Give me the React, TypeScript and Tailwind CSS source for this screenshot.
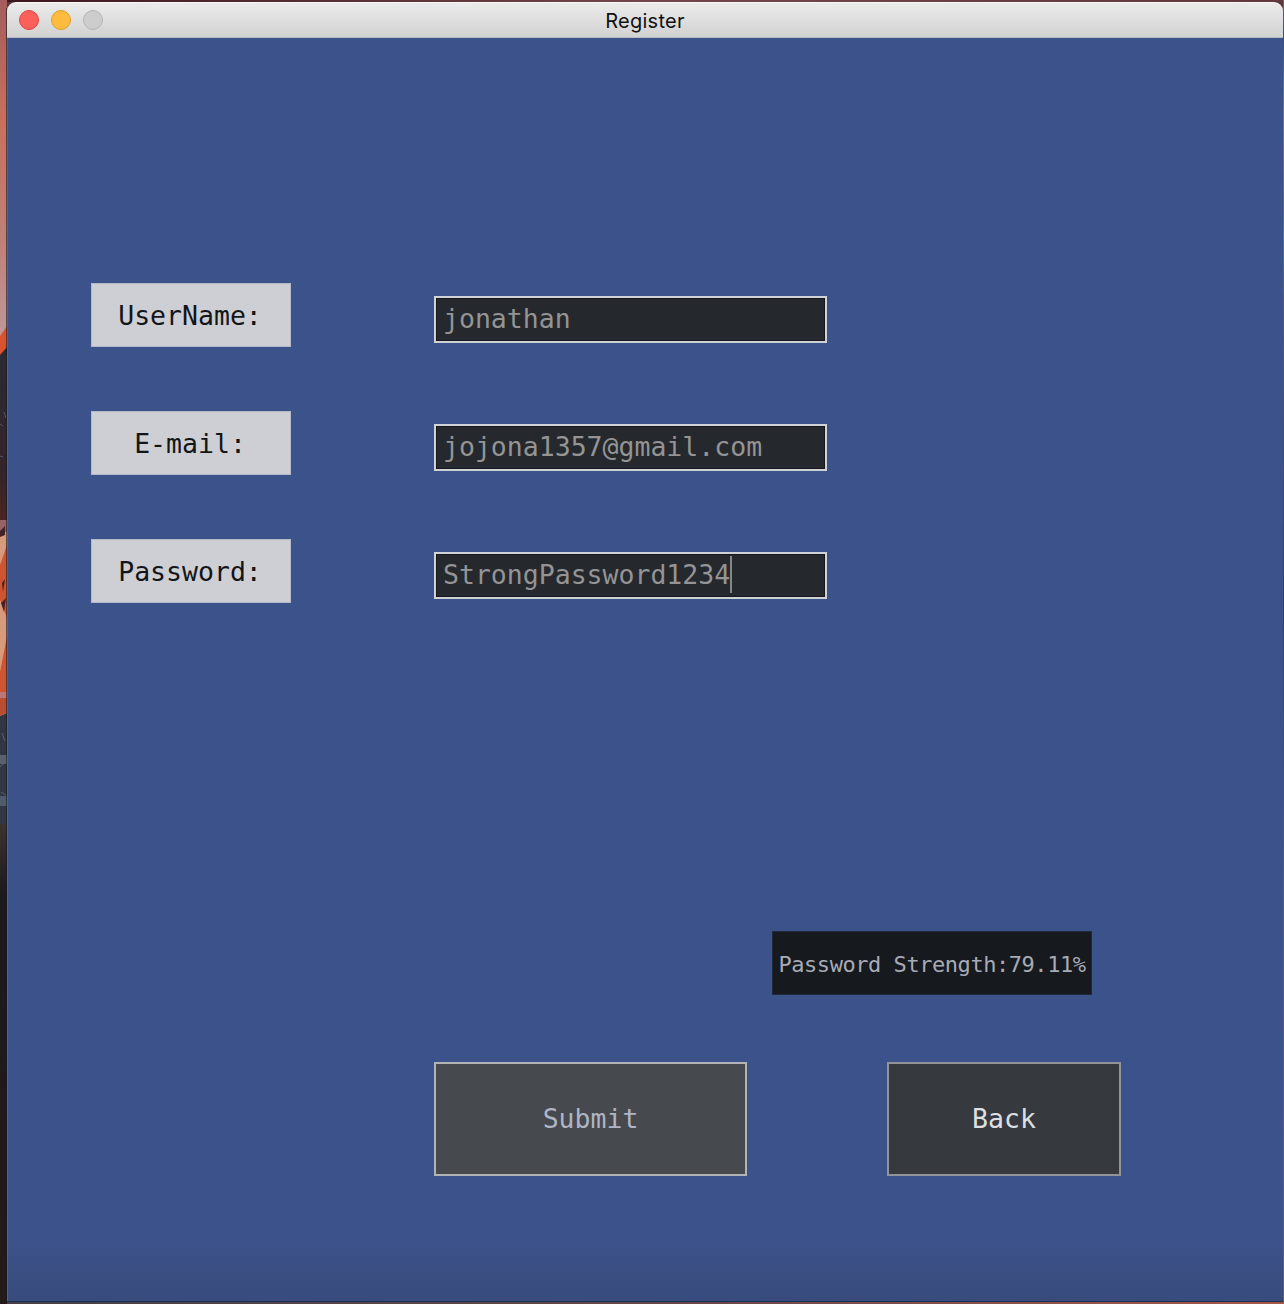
import React from "react";

const mono = "font-['DejaVu_Sans_Mono',monospace]";

const fields = [
  { label: "UserName:", value: "jonathan", focused: false },
  { label: "E-mail:", value: "jojona1357@gmail.com", focused: false },
  { label: "Password:", value: "StrongPassword1234", focused: true },
];

function Wallpaper() {
  return (
    <svg className="h-[1304px] w-[7px] shrink-0" viewBox="0 0 7 1304" preserveAspectRatio="none">
      <defs>
        <linearGradient id="sky" x1="0" y1="0" x2="0" y2="1">
          <stop offset="0" stopColor="#a35d5c" />
          <stop offset="0.35" stopColor="#c9705c" />
          <stop offset="0.7" stopColor="#c08078" />
          <stop offset="1" stopColor="#bd9a9b" />
        </linearGradient>
        <linearGradient id="rock" x1="0" y1="0" x2="0" y2="1">
          <stop offset="0" stopColor="#2b2a33" />
          <stop offset="0.7" stopColor="#32252a" />
          <stop offset="1" stopColor="#4c2420" />
        </linearGradient>
        <linearGradient id="base" x1="0" y1="0" x2="0" y2="1">
          <stop offset="0" stopColor="#3b332f" />
          <stop offset="0.15" stopColor="#1c191c" />
          <stop offset="1" stopColor="#241b19" />
        </linearGradient>
      </defs>
      <rect width="7" height="345" fill="url(#sky)" />
      <path d="M0 336L7 326V352L0 358Z" fill="#d9532f" />
      <path d="M0 355L7 347V522H0Z" fill="url(#rock)" />
      <path d="M0 424L3 426M0 456L3 457M4 412L6 418" stroke="#53576a" fill="none" />
      <rect y="520" width="7" height="12" fill="#956363" />
      <rect y="532" width="7" height="185" fill="#d99a7b" />
      <path d="M0 565L7 545V618L0 600ZM0 672L7 636V706L0 713Z" fill="#cf5530" />
      <path d="M0 531L5 526V535L0 537ZM2 583L5 579L3 592ZM1 603L6 598L4 612Z" fill="#432328" />
      <rect y="692" width="7" height="6" fill="#bd7774" />
      <path d="M0 716L7 713V826H0Z" fill="#303642" />
      <path d="M0 698H7V713L0 716Z" fill="#b94d32" />
      <path d="M2 733L5 741M0 767L5 762M1 792L6 795" stroke="#566371" fill="none" />
      <rect y="755" width="7" height="9" fill="#59616b" />
      <rect y="796" width="7" height="10" fill="#505c6b" />
      <rect y="824" width="7" height="480" fill="url(#base)" />
      <rect x="6" y="8" width="1" height="1296" fill="#111522" opacity="0.6" />
    </svg>
  );
}

function TitleBar() {
  return (
    <header className="grid h-9 shrink-0 grid-cols-[1fr_auto_1fr] items-center rounded-t-[9px] border-t border-[#f7f7f7] border-b border-b-[#b9bbc1] bg-linear-to-b from-[#ebebeb] to-[#d2d2d2]">
      <div className="flex gap-3 pl-3">
        <span className="size-5 rounded-full border border-[#e2463f] bg-[#fc605b]" />
        <span className="size-5 rounded-full border border-[#dfa023] bg-[#fdbc40]" />
        <span className="size-5 rounded-full border border-[#b5b5b5] bg-[#cdcdcd]" />
      </div>
      <h1 className="pt-px font-['Inter',sans-serif] text-[20px] leading-6 tracking-[0.25px] text-[#111111]">Register</h1>
      <div />
    </header>
  );
}

export default function App() {
  return (
    <div className="flex h-[1304px] w-[1284px] overflow-hidden bg-[#57363a]">
      <Wallpaper />
      <div className="flex w-[1276px] shrink-0 flex-col">
        <div className="h-0.5 shrink-0 bg-linear-to-r from-[#3d1821] via-[#74464a] to-[#63393b]" />
        <TitleBar />
        <main className={`flex h-[1263px] shrink-0 flex-col border-l border-[#4a669b] bg-[linear-gradient(to_bottom,#3c528a_0,#3c528a_1200px,#384b7c_1263px)] ${mono}`}>
          <form className="flex flex-col gap-16 pt-[245px] pl-[83px]">
            {fields.map((f) => (
              <div key={f.label} className="flex h-16 gap-[143px] text-[26.5px]">
                <label className="flex w-[200px] items-center justify-center border border-[#b5bac8] bg-[#cecfd5] pt-0.5 pr-0.5 text-[#141517]">
                  {f.label}
                </label>
                <div className="mt-[13px] flex h-[47px] w-[393px] items-center border-2 border-[#d0d2d6] bg-[#25282d] pb-0.5 pl-[7px] whitespace-pre text-[#949494] shadow-[inset_0_0_0_1px_#15181d]">
                  {f.value}
                  {f.focused && <span className="h-[37px] w-0.5 bg-[#85878a]" />}
                </div>
              </div>
            ))}
          </form>
          <div className="mt-[328px] ml-[764px] flex h-16 w-80 items-center justify-center border border-[#20283a] bg-[#16191e] pt-0.5 text-[22px] tracking-[-0.45px] whitespace-pre text-[#a7abb5]">
            Password Strength:79.11%
          </div>
          <div className="mt-[67px] flex gap-[140px] pl-[426px] text-[26.5px]">
            <button type="button" className="h-[114px] w-[313px] border-2 border-[#b1b3b5] bg-[#46494e] text-[#afb5c4]">
              Submit
            </button>
            <button type="button" className="h-[114px] w-[234px] border-2 border-[#929497] bg-[#36393e] text-[#dddfe1]">
              Back
            </button>
          </div>
        </main>
        <div className="h-px shrink-0 bg-[#173255]" />
        <div className="h-0.5 shrink-0 bg-linear-to-r from-[#454047] via-[#64464a] to-[#a95748]" />
      </div>
      <div className="w-px shrink-0 bg-[linear-gradient(to_bottom,#895b60_0,#344e70_38px,#397a91_80px,#7c6980_115px,#68637a_200px,#397a91_240px,#60586a_300px,#313f5c_600px,#555f75_900px,#8c5147_1304px)]" />
    </div>
  );
}
